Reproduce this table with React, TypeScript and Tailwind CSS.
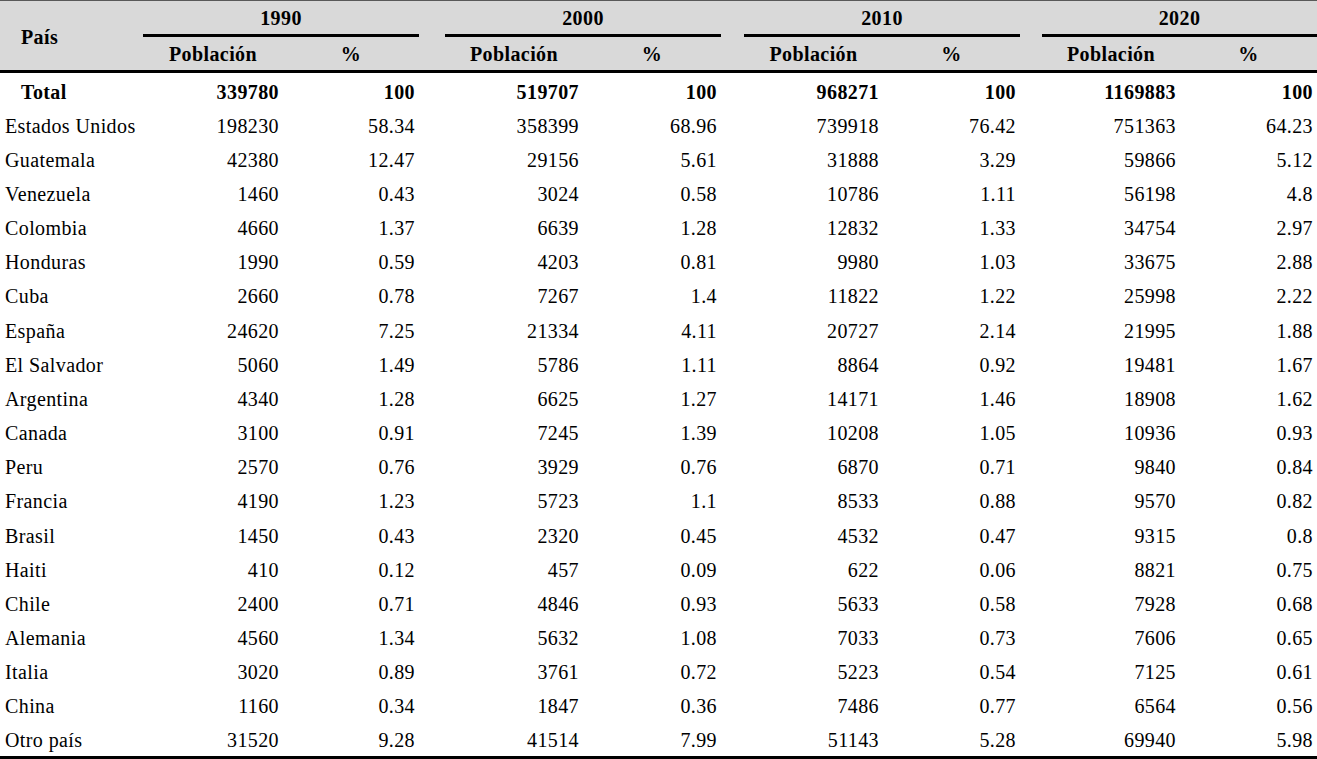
const years = ["1990", "2000", "2010", "2020"]

type Row = { name: string; values: string[]; total?: boolean }

const rows: Row[] = [
  { name: "Total", values: ["339780", "100", "519707", "100", "968271", "100", "1169883", "100"], total: true },
  { name: "Estados Unidos", values: ["198230", "58.34", "358399", "68.96", "739918", "76.42", "751363", "64.23"] },
  { name: "Guatemala", values: ["42380", "12.47", "29156", "5.61", "31888", "3.29", "59866", "5.12"] },
  { name: "Venezuela", values: ["1460", "0.43", "3024", "0.58", "10786", "1.11", "56198", "4.8"] },
  { name: "Colombia", values: ["4660", "1.37", "6639", "1.28", "12832", "1.33", "34754", "2.97"] },
  { name: "Honduras", values: ["1990", "0.59", "4203", "0.81", "9980", "1.03", "33675", "2.88"] },
  { name: "Cuba", values: ["2660", "0.78", "7267", "1.4", "11822", "1.22", "25998", "2.22"] },
  { name: "España", values: ["24620", "7.25", "21334", "4.11", "20727", "2.14", "21995", "1.88"] },
  { name: "El Salvador", values: ["5060", "1.49", "5786", "1.11", "8864", "0.92", "19481", "1.67"] },
  { name: "Argentina", values: ["4340", "1.28", "6625", "1.27", "14171", "1.46", "18908", "1.62"] },
  { name: "Canada", values: ["3100", "0.91", "7245", "1.39", "10208", "1.05", "10936", "0.93"] },
  { name: "Peru", values: ["2570", "0.76", "3929", "0.76", "6870", "0.71", "9840", "0.84"] },
  { name: "Francia", values: ["4190", "1.23", "5723", "1.1", "8533", "0.88", "9570", "0.82"] },
  { name: "Brasil", values: ["1450", "0.43", "2320", "0.45", "4532", "0.47", "9315", "0.8"] },
  { name: "Haiti", values: ["410", "0.12", "457", "0.09", "622", "0.06", "8821", "0.75"] },
  { name: "Chile", values: ["2400", "0.71", "4846", "0.93", "5633", "0.58", "7928", "0.68"] },
  { name: "Alemania", values: ["4560", "1.34", "5632", "1.08", "7033", "0.73", "7606", "0.65"] },
  { name: "Italia", values: ["3020", "0.89", "3761", "0.72", "5223", "0.54", "7125", "0.61"] },
  { name: "China", values: ["1160", "0.34", "1847", "0.36", "7486", "0.77", "6564", "0.56"] },
  { name: "Otro país", values: ["31520", "9.28", "41514", "7.99", "51143", "5.28", "69940", "5.98"] },
]

// país | pob % | gap | pob % | gap | pob % | gap | pob %
const cols = "grid grid-cols-[143px_140px_136px_26px_138px_138px_23px_139px_137px_22px_138px_137px]"

function DataRow({ row }: { row: Row }) {
  const weight = row.total ? "font-bold" : ""
  return (
    <>
      <div className={`flex items-center pt-[3px] ${row.total ? "pl-[21px] font-bold" : "pl-[5px]"}`}>{row.name}</div>
      {years.map((y, i) => (
        <div key={y} className="contents">
          {i > 0 && <div />}
          <div className={`flex items-center justify-end pt-[3px] pr-[4px] ${weight}`}>{row.values[i * 2]}</div>
          <div className={`flex items-center justify-end pt-[3px] pr-[4px] ${weight}`}>{row.values[i * 2 + 1]}</div>
        </div>
      ))}
    </>
  )
}

export default function App() {
  return (
    <div
      className="w-[1317px] h-[759px] bg-white text-black text-[20px] leading-none tracking-[0.4px] overflow-hidden"
      style={{ fontFamily: '"Liberation Serif", "Times New Roman", serif' }}
    >
      {/* header */}
      <div className={`${cols} grid-rows-[36px_33px] bg-[#d9d9d9] border-t border-[#595959] border-b-[3px] border-b-black font-bold`}>
        <div className="row-span-2 flex items-center pl-[21px] pt-[2px]">País</div>
        {years.map((y, i) => (
          <div key={y} className="contents">
            {i > 0 && <div />}
            <div className="col-span-2 flex items-center justify-center border-b-[3px] border-black pt-[1px]">{y}</div>
          </div>
        ))}
        {years.map((y, i) => (
          <div key={y} className="contents">
            {i > 0 && <div />}
            <div className="flex items-center justify-center">Población</div>
            <div className="flex items-center justify-center">%</div>
          </div>
        ))}
      </div>

      {/* body */}
      <div className={`${cols} grid-rows-[repeat(20,1fr)] h-[686px] border-b-[3px] border-black`}>
        {rows.map((r) => (
          <DataRow key={r.name} row={r} />
        ))}
      </div>
    </div>
  )
}
